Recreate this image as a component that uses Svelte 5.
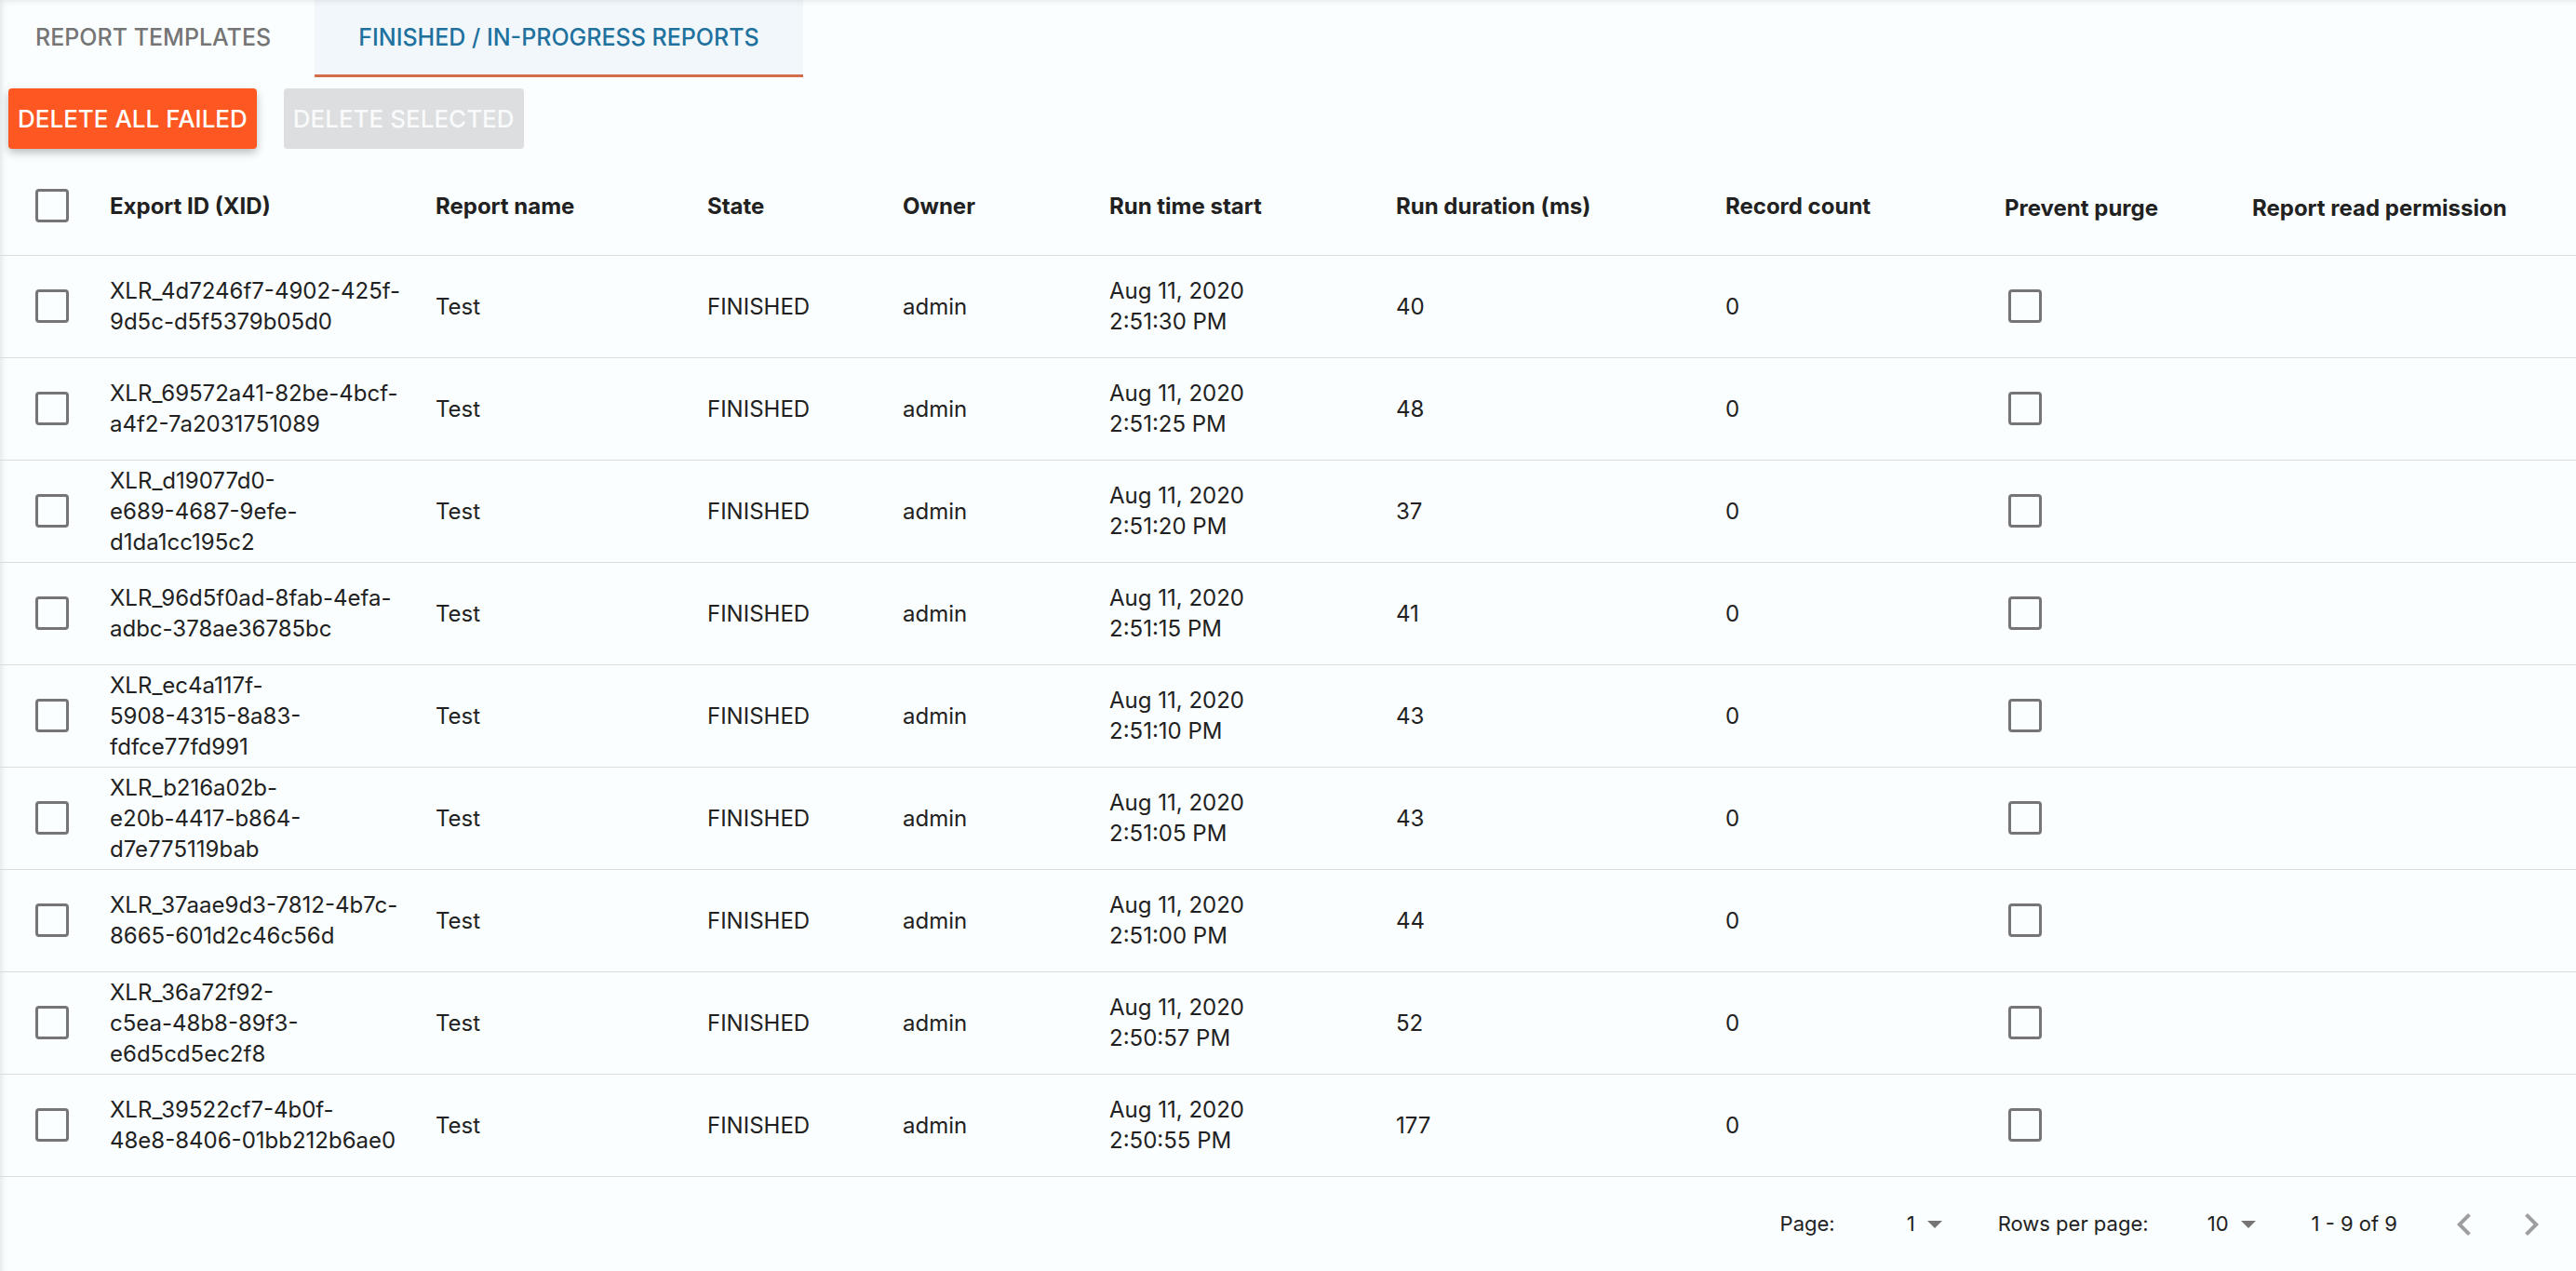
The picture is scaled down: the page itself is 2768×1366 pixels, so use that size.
<script>
	const columns = [
		{ key: 'xid', label: 'Export ID (XID)' },
		{ key: 'name', label: 'Report name' },
		{ key: 'state', label: 'State' },
		{ key: 'owner', label: 'Owner' },
		{ key: 'start', label: 'Run time start' },
		{ key: 'duration', label: 'Run duration (ms)' },
		{ key: 'count', label: 'Record count' }
	];

	const report = (xid, time, duration) => ({
		xid,
		name: 'Test',
		state: 'FINISHED',
		owner: 'admin',
		start: `Aug 11, 2020\n${time} PM`,
		duration,
		count: 0,
		selected: false,
		keep: false
	});

	let reports = $state([
		report('XLR_4d7246f7-4902-425f-\n9d5c-d5f5379b05d0', '2:51:30', 40),
		report('XLR_69572a41-82be-4bcf-\na4f2-7a2031751089', '2:51:25', 48),
		report('XLR_d19077d0-\ne689-4687-9efe-\nd1da1cc195c2', '2:51:20', 37),
		report('XLR_96d5f0ad-8fab-4efa-\nadbc-378ae36785bc', '2:51:15', 41),
		report('XLR_ec4a117f-\n5908-4315-8a83-\nfdfce77fd991', '2:51:10', 43),
		report('XLR_b216a02b-\ne20b-4417-b864-\nd7e775119bab', '2:51:05', 43),
		report('XLR_37aae9d3-7812-4b7c-\n8665-601d2c46c56d', '2:51:00', 44),
		report('XLR_36a72f92-\nc5ea-48b8-89f3-\ne6d5cd5ec2f8', '2:50:57', 52),
		report('XLR_39522cf7-4b0f-\n48e8-8406-01bb212b6ae0', '2:50:55', 177)
	]);

	let tab = $state('reports');
	let page = $state('1');
	let perPage = $state('10');
	let anySelected = $derived(reports.some((r) => r.selected));
	let allSelected = $derived(reports.length > 0 && reports.every((r) => r.selected));

	function toggleAll(e) {
		for (const r of reports) r.selected = e.target.checked;
	}

	function deleteSelected() {
		reports = reports.filter((r) => !r.selected);
	}

	function deleteFailed() {
		reports = reports.filter((r) => r.state !== 'FAILED');
	}
</script>

<main>
	<nav>
		<button class:active={tab === 'templates'} onclick={() => (tab = 'templates')}>REPORT TEMPLATES</button>
		<button class:active={tab === 'reports'} onclick={() => (tab = 'reports')}>FINISHED / IN-PROGRESS REPORTS</button>
	</nav>

	<div class="actions">
		<button onclick={deleteFailed}>DELETE ALL FAILED</button>
		<button disabled={!anySelected} onclick={deleteSelected}>DELETE SELECTED</button>
	</div>

	<table>
		<thead>
			<tr>
				<th class="select"><input type="checkbox" aria-label="Select all" checked={allSelected} onchange={toggleAll} /></th>
				{#each columns as column}
					<th class={column.key}>{column.label}</th>
				{/each}
				<th class="keep">Prevent purge</th>
				<th class="permission">Report read permission</th>
			</tr>
		</thead>
		<tbody>
			{#each reports as r (r.xid)}
				<tr>
					<td class="select"><input type="checkbox" aria-label="Select report" bind:checked={r.selected} /></td>
					{#each columns as column}
						<td>{r[column.key]}</td>
					{/each}
					<td class="keep"><input type="checkbox" aria-label="Prevent purge" bind:checked={r.keep} /></td>
					<td></td>
				</tr>
			{/each}
		</tbody>
	</table>

	<footer>
		<label for="page">Page:</label>
		<div class="picker">
			<select id="page" bind:value={page}>
				<option>1</option>
			</select>
			<svg viewBox="0 0 16 8" aria-hidden="true"><path d="M0 0h16L8 8z" /></svg>
		</div>
		<label for="per-page">Rows per page:</label>
		<div class="picker">
			<select id="per-page" bind:value={perPage}>
				<option>10</option>
				<option>25</option>
				<option>50</option>
			</select>
			<svg viewBox="0 0 16 8" aria-hidden="true"><path d="M0 0h16L8 8z" /></svg>
		</div>
		<span class="range">1 - 9 of 9</span>
		<button aria-label="Previous page" disabled>
			<svg viewBox="0 0 24 24"><path d="M15.41 7.41 14 6l-6 6 6 6 1.41-1.41L10.83 12z" /></svg>
		</button>
		<button aria-label="Next page" disabled>
			<svg viewBox="0 0 24 24"><path d="M10 6 8.59 7.41 13.17 12l-4.58 4.59L10 18l6-6z" /></svg>
		</button>
	</footer>
</main>

<style>
	:global(body) {
		background: #fafeff;
	}

	main {
		box-sizing: border-box;
		min-height: 100vh;
		box-shadow: inset 5px 4px 6px -3px rgba(0, 0, 0, 0.1);
		color: #212121;
		font: 24px/33px Inter, "Liberation Sans", sans-serif;
	}

	button {
		border: 0;
		background: none;
		font: inherit;
	}

	nav {
		display: flex;
	}

	nav button {
		height: 83px;
		padding: 0 47px 3px;
		color: #757575;
		font-size: 25px;
		font-weight: 500;
	}

	nav button:first-child {
		padding-left: 38px;
	}

	nav button.active {
		padding-bottom: 0;
		border-bottom: 3px solid #d36c4b;
		background: rgba(33, 80, 120, 0.04);
		color: #21719f;
	}

	.actions {
		display: flex;
		gap: 29px;
		padding: 12px 9px 0;
	}

	.actions button {
		height: 65px;
		padding: 0 10px;
		border-radius: 4px;
		background: #ff5722;
		box-shadow: 0 4px 10px rgba(0, 0, 0, 0.26);
		color: #fff;
		font-size: 26px;
		font-weight: 500;
	}

	.actions button:disabled {
		background: #dddee0;
		box-shadow: none;
		color: #f9fafb;
	}

	table {
		width: 100%;
		border-collapse: collapse;
		table-layout: fixed;
	}

	th,
	td {
		box-sizing: border-box;
		height: 110px;
		padding: 0;
		border-bottom: 1px solid #dadee1;
		text-align: left;
		vertical-align: middle;
		white-space: pre-line;
	}

	th {
		height: 114px;
		padding-top: 9px;
		font-weight: 700;
	}

	/* column widths are shares, the table stretches them to the window */
	.select {
		width: 59px;
		padding-left: 38px;
	}

	.xid {
		width: 175px;
	}

	.name {
		width: 146px;
	}

	.state {
		width: 105px;
	}

	.owner {
		width: 111px;
	}

	.start {
		width: 154px;
	}

	.duration {
		width: 177px;
	}

	.count {
		width: 150px;
	}

	.keep {
		width: 133px;
	}

	.permission {
		width: 174px;
	}

	th.keep,
	th.permission {
		padding-top: 13px;
	}

	td.keep {
		padding-left: 4px;
	}

	input {
		display: block;
		box-sizing: border-box;
		width: 36px;
		height: 36px;
		margin: 0;
		border: 3px solid #757575;
		border-radius: 4px;
		appearance: none;
	}

	input:checked {
		background: #21719f;
	}

	footer {
		display: flex;
		align-items: center;
		justify-content: flex-end;
		height: 102px;
		padding-right: 24px;
		font-size: 22px;
	}

	.picker {
		display: flex;
		align-items: center;
		gap: 13px;
		margin: 0 60px;
	}

	select {
		width: 26px;
		padding: 0;
		border: 0;
		background: none;
		color: inherit;
		font: inherit;
		text-align: right;
		text-align-last: right;
		appearance: none;
	}

	svg {
		fill: #757575;
	}

	.picker svg {
		width: 16px;
		height: 8px;
	}

	.range {
		margin-right: 48px;
	}

	footer button {
		padding: 0;
		width: 48px;
		height: 48px;
	}

	footer button + button {
		margin-left: 24px;
	}

	footer button svg {
		display: block;
		width: 48px;
		height: 48px;
		fill: #9c9ea0;
	}
</style>
